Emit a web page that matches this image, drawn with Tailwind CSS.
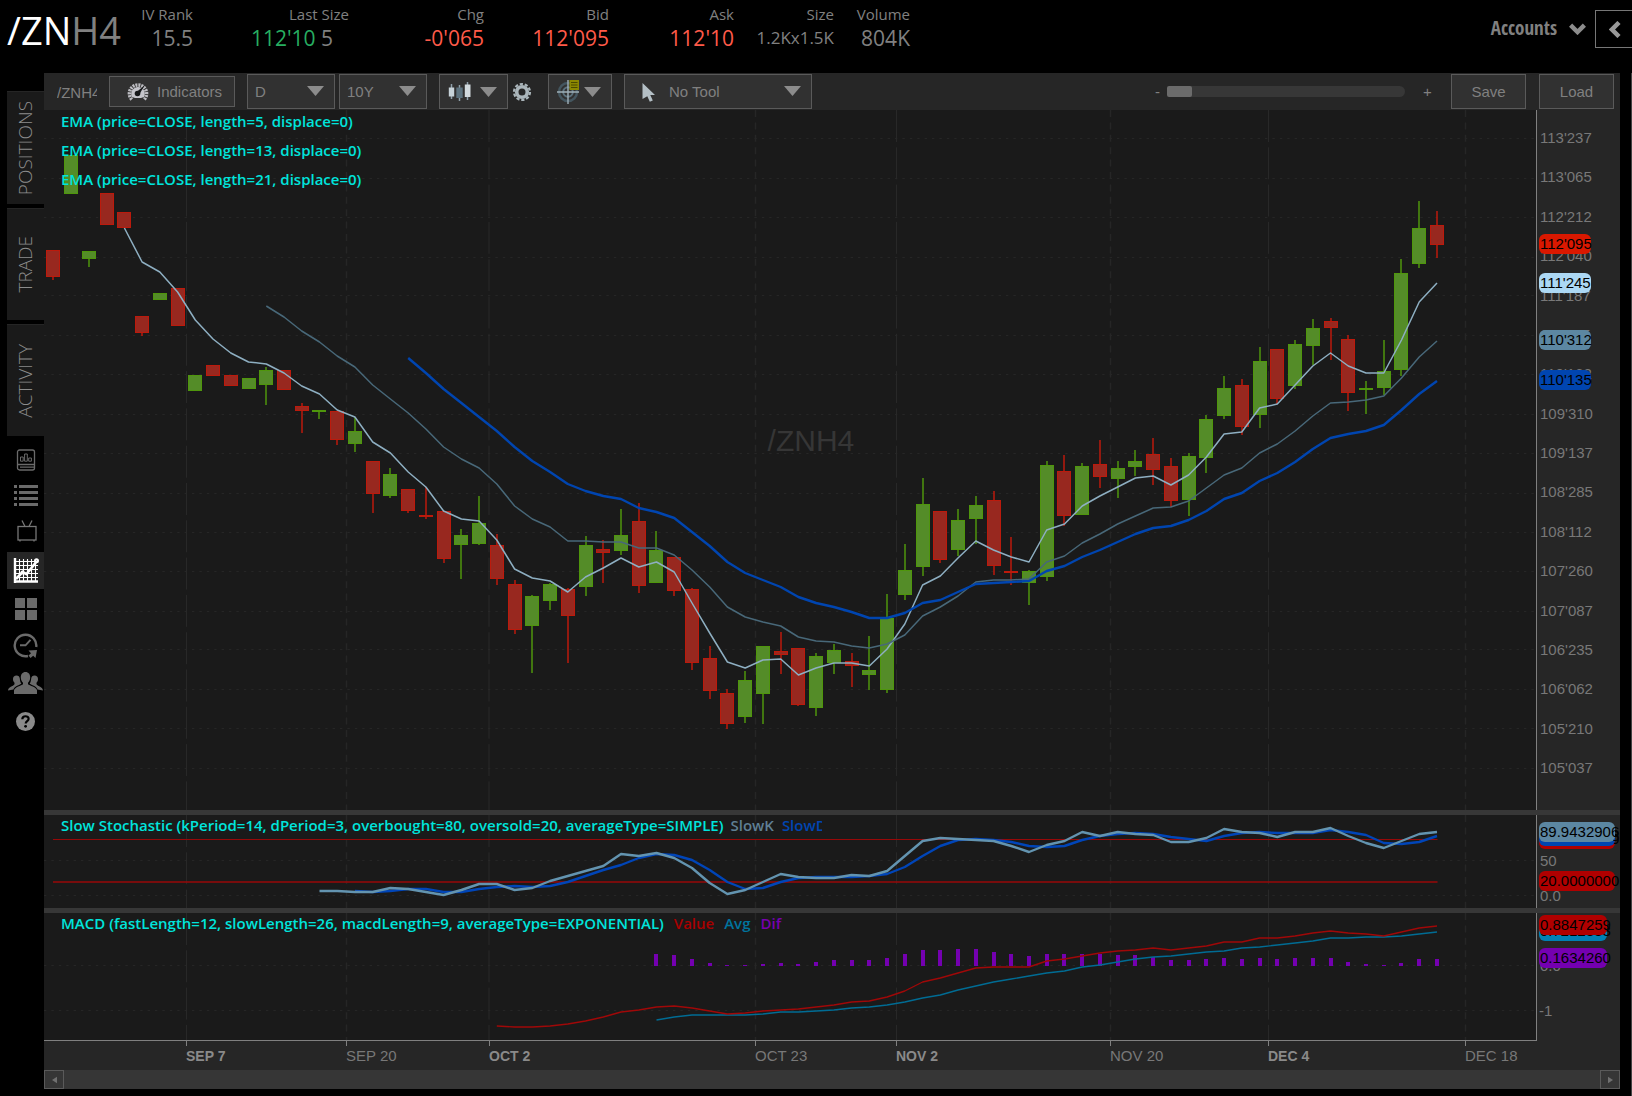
<!DOCTYPE html>
<html lang="en">
<head>
<meta charset="utf-8">
<title>/ZNH4 Chart</title>
<script src="https://cdn.jsdelivr.net/npm/@tailwindcss/browser@4"></script>
</head>
<body class="flex min-h-screen flex-col overflow-x-hidden bg-black font-['Open_Sans','Noto_Sans',sans-serif] text-[#808080]">

<header class="flex h-[73px] shrink-0 items-start">
  <h1 class="ml-[7px] w-[116px] shrink-0 pt-[4px] text-[38px] leading-[52px] text-white">/ZN<span class="text-[#808080]">H4</span></h1>
  <dl class="flex pt-[3px] text-right text-[15px] leading-[22px]">
    <div class="w-[70px]"><dt>IV Rank</dt><dd class="text-[21px] leading-[26px]">15.5</dd></div>
    <div class="w-[156px]"><dt>Last Size</dt><dd class="pr-4 text-[21px] leading-[26px]"><span class="text-[#27ae60]">112'10</span> 5</dd></div>
    <div class="w-[135px]"><dt>Chg</dt><dd class="text-[21px] leading-[26px] text-[#ff5a49]">-0'065</dd></div>
    <div class="w-[125px]"><dt>Bid</dt><dd class="text-[21px] leading-[26px] text-[#ff5a49]">112'095</dd></div>
    <div class="w-[125px]"><dt>Ask</dt><dd class="text-[21px] leading-[26px] text-[#ff5a49]">112'10</dd></div>
    <div class="w-[100px]"><dt>Size</dt><dd class="text-[17px] leading-[26px]">1.2Kx1.5K</dd></div>
    <div class="w-[76px]"><dt>Volume</dt><dd class="text-[21px] leading-[26px]">804K</dd></div>
  </dl>
  <button class="mt-[10px] ml-auto flex h-[37px] items-center gap-3 font-['Open_Sans_Condensed','Noto_Sans_Condensed','Liberation_Sans_Narrow','Open_Sans',sans-serif] text-[19px] font-bold">Accounts
    <svg class="h-3 w-[17px]" viewBox="0 0 17 12" fill="none" stroke="#8c8c8c" stroke-width="4.5"><path d="M1.6 2.2 8.5 9 15.400 2.2"/></svg>
  </button>
  <button aria-label="Expand panel" class="mt-[10px] ml-[9px] flex h-[38px] w-[37px] items-center justify-center border border-r-0 border-[#777] pl-px">
    <svg class="h-[17px] w-3" viewBox="0 0 12 17" fill="none" stroke="#999" stroke-width="4.500"><path d="M10 1.500 3 8.500l7 7"/></svg>
  </button>
</header>

<div class="flex flex-1 border-r border-[#444]">
  <nav class="flex w-11 shrink-0 flex-col pl-[7px] pt-[18px]">
    <div class="mb-[5px] flex flex-col gap-1 text-[19px] font-light text-[#8c8c8c]">
      <button class="flex h-[113px] items-center justify-center border-t border-[#252525] bg-[#1a1a1a]"><span class="rotate-180 [writing-mode:vertical-rl]">POSITIONS</span></button>
      <button class="flex h-[112px] items-center justify-center border-t border-[#252525] bg-[#1a1a1a]"><span class="rotate-180 [writing-mode:vertical-rl]">TRADE</span></button>
      <button class="flex h-[112px] items-center justify-center border-t border-[#252525] bg-[#1a1a1a]"><span class="rotate-180 [writing-mode:vertical-rl]">ACTIVITY</span></button>
    </div>
    <button aria-label="Reports" class="flex h-[37px] items-center justify-center text-[#6a6a6a]">
      <svg class="h-[22px] w-5" viewBox="0 0 20 22" fill="none" stroke="currentColor" stroke-width="1.300"><rect x="1.500" y="1" width="17" height="20" rx="2"/><path d="M2 15.500h16M4 18.200h14"/><path d="M4.500 12.200V8h2.700v4.200zM8.600 12.200V5h2.700v7.200zM12.700 12.200V9h2.700v3.200z" stroke-width="1"/></svg>
    </button>
    <button aria-label="Watchlist" class="flex h-[35px] items-center justify-center text-[#6a6a6a]">
      <svg class="h-[21px] w-6" viewBox="0 0 24 21" fill="currentColor"><path d="M0 0h3v3H0zM5 0h19v3H5zM0 6h3v3H0zM5 6h19v3H5zM0 12h3v3H0zM5 12h19v3H5zM0 18h3v3H0zM5 18h19v3H5z"/></svg>
    </button>
    <button aria-label="TV" class="flex h-[39px] items-center justify-center pb-1 pl-[2px] text-[#767676]">
      <svg class="h-[22px] w-5" viewBox="0 0 20 22" fill="none" stroke="currentColor" stroke-width="1.300"><rect x="1" y="6.500" width="18" height="13.500"/><path d="m5 .5 3 6M15 .5l-3 6M3 20v1.500M17 20v1.500"/></svg>
    </button>
    <button aria-label="Charts" class="flex h-[37px] items-center justify-center bg-[#262626] text-white">
      <svg class="h-[25px] w-[26px]" viewBox="0 0 26 25" fill="none" stroke="currentColor"><path d="M2 0v25M1 23.500h24" stroke-width="2.400"/><path d="M6.500 1v22M10.500 1v22M14.500 1v22M18.500 1v22M22.500 1v22M2 3.500h23M2 7.500h23M2 11.500h23M2 15.500h23M2 19.500h23" stroke-width="1.100"/><path d="M3 21 9.500 14l4 2 10.500-13" stroke-width="2.600"/><circle cx="23.500" cy="2.800" r="1.500" stroke-width="2"/><circle cx="9.500" cy="14.500" r="1" stroke-width="2"/></svg>
    </button>
    <button aria-label="Grid" class="flex h-[39px] items-center justify-center text-[#6a6a6a]">
      <svg class="h-[22px] w-[22px]" viewBox="0 0 22 22" fill="currentColor"><path d="M0 0h10v10H0zM12 0h10v10H12zM0 12h10v10H0zM12 12h10v10H12z"/></svg>
    </button>
    <button aria-label="History" class="flex h-[35px] items-center justify-center text-[#6a6a6a]">
      <svg class="h-[25px] w-[25px]" viewBox="0 0 25 25" fill="none" stroke="currentColor" stroke-width="2.400"><path d="M15 23A10.800 10.800 0 1 1 23.200 14"/><path d="M7 12.300h5.500l5-5.500" stroke-width="2"/><path d="m15.500 17.500 8.500-.5-1.500 8-2.300-2.300-2.700 2.300-2-2.500 2.500-2.200z" fill="currentColor" stroke="none"/></svg>
    </button>
    <button aria-label="Community" class="flex h-[39px] items-center justify-center text-[#6a6a6a]">
      <svg class="h-[22px] w-[35px]" viewBox="0 0 35 22" fill="currentColor"><path d="M17.500 0c3 0 4.700 2.300 4.700 5.300 0 2.600-1 4.200-2.200 5.400v1.600c1.500 1.300 8.500 2.800 9 6V22H6v-3.700c.5-3.200 7.500-4.700 9-6v-1.600c-1.200-1.200-2.200-2.800-2.200-5.400 0-3 1.700-5.300 4.700-5.300z"/><path d="M8.500 3.500c2 0 3 1.300 3.300 3 .2 2.300.6 4 1.600 5.300-3 1.700-7 2.700-8 5.700L0 18.500c.3-3.500 5-4 6.500-6.200v-1.500C5.300 9.500 5 8.500 5 7c0-2 1.300-3.500 3.500-3.500zM26.500 3.500c-2 0-3 1.300-3.300 3-.2 2.300-.6 4-1.600 5.300 3 1.700 7 2.700 8 5.700l5.400 1c-.3-3.500-5-4-6.500-6.200v-1.500c1.200-1.300 1.500-2.300 1.500-3.800 0-2-1.300-3.500-3.500-3.500z"/></svg>
    </button>
    <button aria-label="Help" class="flex h-[39px] items-center justify-center text-[#8a8a8a]">
      <svg class="h-[19px] w-[19px]" viewBox="0 0 19 19"><circle cx="9.500" cy="9.500" r="9.500" fill="currentColor"/><path d="M6.300 7.200c.1-4 6.500-3.800 6.300-.2-.1 2-2.900 2.200-2.900 4.400" fill="none" stroke="#000" stroke-width="2.200"/><circle cx="9.600" cy="14.300" r="1.400" fill="#000"/></svg>
    </button>
  </nav>

  <main class="mr-[11px] mb-[7px] flex min-w-0 flex-1 flex-col bg-[#262626]">
    <div class="flex h-[37px] shrink-0 items-center font-['Liberation_Sans',Arial,sans-serif] text-[15px] text-[#808080]">
      <input aria-label="Symbol" value="/ZNH4" class="ml-[13px] h-8 w-10 bg-transparent pt-[2px] outline-none">
      <button class="ml-3 flex h-[31px] w-[126px] items-center gap-2 border border-[#5a5a5a] bg-[#313131] pl-[17px]">
        <svg class="h-5 w-[22px]" viewBox="0 0 22 20" fill="none"><path d="M4.800 17.500a8.600 8.600 0 1 1 12.400 0" stroke="#bdbdc2" stroke-width="3.500" stroke-dasharray="2 .9"/><path d="M5 15a6.800 6.800 0 1 1 12 0l-3 1H8z" fill="#c4c4ca"/><circle cx="10.500" cy="11.500" r="2.800" fill="#16181a"/><path d="m9.500 10 8-6.500-5.500 9.500z" fill="#16181a"/></svg>
        <span class="pt-[2px]">Indicators</span>
      </button>
      <div class="relative ml-3">
        <select aria-label="Aggregation" class="block h-[35px] w-[88px] appearance-none border border-[#5a5a5a] bg-[#313131] pt-[2px] pl-[7px]"><option>D</option></select>
        <svg class="pointer-events-none absolute top-3 right-[11px] h-[10px] w-[17px]" viewBox="0 0 17 10"><path d="M0 0h17L8.500 10z" fill="#8c8c8c"/></svg>
      </div>
      <div class="relative ml-1">
        <select aria-label="Range" class="block h-[35px] w-[88px] appearance-none border border-[#5a5a5a] bg-[#313131] pt-[2px] pl-[7px]"><option>10Y</option></select>
        <svg class="pointer-events-none absolute top-3 right-[11px] h-[10px] w-[17px]" viewBox="0 0 17 10"><path d="M0 0h17L8.500 10z" fill="#8c8c8c"/></svg>
      </div>
      <button aria-label="Chart type" class="ml-3 flex h-[35px] w-[69px] items-center gap-2 border border-[#5a5a5a] bg-[#313131] pl-2">
        <svg class="h-5 w-6" viewBox="0 0 24 20"><path d="M3.500 2v15M11.500 3v16M19.500 0v18" stroke="#8fa0aa" stroke-width="1.500"/><path d="M.8 5.500h5.400v9H.8z" fill="#c6d2d8"/><path d="M8.300 5.500h6.400V16H8.300z" fill="#5c727e"/><path d="M16.800 2.500h5.700V15h-5.700z" fill="#d2dade"/></svg>
        <svg class="h-[10px] w-[17px]" viewBox="0 0 17 10"><path d="M0 0h17L8.500 10z" fill="#8c8c8c"/></svg>
      </button>
      <button aria-label="Settings" class="ml-1">
        <svg class="h-5 w-5" viewBox="0 0 20 20" fill="none"><circle cx="10" cy="10" r="5.300" stroke="#aab5ba" stroke-width="3.600"/><circle cx="10" cy="10" r="8" stroke="#aab5ba" stroke-width="2.200" stroke-dasharray="3.200 1.826"/></svg>
      </button>
      <button aria-label="Crosshair" class="ml-4 flex h-[35px] w-16 items-center gap-1 border border-[#5a5a5a] bg-[#313131] pl-2">
        <svg class="h-6 w-[23px]" viewBox="0 0 23 24" fill="none"><circle cx="11" cy="12" r="9" stroke="#44565f" stroke-width="2.500"/><circle cx="11" cy="12" r="4.800" stroke="#5c727d" stroke-width="2"/><path d="M11 0v24M0 12h22" stroke="#9fb0b8" stroke-width="1.400"/><path d="M12.500 0h9.500v10h-9.500z" fill="#8c8800"/><path d="M14 2.500h6.500M14 5h6.500M14 7.500h6.500" stroke="#4c4a00"/></svg>
        <svg class="h-[10px] w-[17px]" viewBox="0 0 17 10"><path d="M0 0h17L8.500 10z" fill="#8c8c8c"/></svg>
      </button>
      <div class="relative ml-3">
        <svg class="pointer-events-none absolute top-[9px] left-[18px] h-[19px] w-[14px]" viewBox="0 0 14 19"><path d="M.5 0 13 12H8.300l2.500 5.500-3 1.300-2.500-5.500L.5 16z" fill="#b4bfc5"/></svg>
        <select aria-label="Drawing tool" class="block h-[35px] w-[188px] appearance-none border border-[#5a5a5a] bg-[#313131] pt-[2px] pl-11"><option>No Tool</option></select>
        <svg class="pointer-events-none absolute top-3 right-[11px] h-[10px] w-[17px]" viewBox="0 0 17 10"><path d="M0 0h17L8.500 10z" fill="#8c8c8c"/></svg>
      </div>
      <div class="ml-auto flex items-center">
        <span class="pt-[2px]">-</span>
        <input type="range" min="0" max="100" value="0" aria-label="Zoom" class="mx-[7px] mr-[18px] h-[11px] w-[238px] appearance-none rounded-md bg-[#373737] [&::-webkit-slider-thumb]:h-[11px] [&::-webkit-slider-thumb]:w-[25px] [&::-webkit-slider-thumb]:appearance-none [&::-webkit-slider-thumb]:rounded-xs [&::-webkit-slider-thumb]:bg-[#6b6b6b]">
        <span class="w-7 pt-[2px]">+</span>
        <button class="h-[35px] w-[75px] border border-[#5a5a5a] bg-[#313131] pt-[2px]">Save</button>
        <button class="mr-[6px] ml-[13px] h-[35px] w-[75px] border border-[#5a5a5a] bg-[#313131] pt-[2px]">Load</button>
      </div>
    </div>

    <section class="flex min-h-[500px] flex-1">
      <div class="relative flex-1 bg-[#1a1a1a]">
        <div class="absolute top-[45%] left-[48.500%] font-['Liberation_Sans',Arial,sans-serif] text-3xl leading-8 text-[#363636]">/ZNH4</div>
        <svg id="price" class="absolute inset-0 h-full w-full" viewBox="44 110 1492 700" preserveAspectRatio="none"></svg>
        <div class="relative flex flex-col gap-[9px] pt-[1px] pl-[17px] text-[15px] leading-5 font-semibold text-[#00e4dc]">
          <p>EMA (price=CLOSE, length=5, displace=0)</p>
          <p>EMA (price=CLOSE, length=13, displace=0)</p>
          <p>EMA (price=CLOSE, length=21, displace=0)</p>
        </div>
      </div>
      <div class="relative flex w-[84px] flex-col justify-between overflow-hidden border-l border-[#808080] pt-[18px] pb-8 pl-[3px] font-['Liberation_Sans',Arial,sans-serif] text-[15px] leading-5 text-[#787878]">
        <span>113'237</span><span>113'065</span><span>112'212</span><span>112'040</span><span>111'187</span><span>111'015</span><span>110'162</span><span>109'310</span><span>109'137</span><span>108'285</span><span>108'112</span><span>107'260</span><span>107'087</span><span>106'235</span><span>106'062</span><span>105'210</span><span>105'037</span>
        <span class="absolute top-[124px] left-[2px] h-5 w-[52px] rounded-md bg-[#da1800] pl-px text-black">112'095</span>
        <span class="absolute top-[163px] left-[2px] h-5 w-[52px] rounded-md bg-[#acd8f4] pl-px text-black">111'245</span>
        <span class="absolute top-[220px] left-[2px] h-5 w-[52px] rounded-md bg-[#5c87a2] pl-px text-black">110'312</span>
        <span class="absolute top-[260px] left-[2px] h-5 w-[52px] rounded-md bg-[#0045b0] pl-px text-black">110'135</span>
      </div>
    </section>

    <div class="h-[5px] shrink-0 bg-[#373737]"></div>

    <section class="flex h-[93px] shrink-0">
      <div class="relative flex-1 bg-[#1a1a1a]">
        <svg id="stoch" class="absolute inset-0 h-full w-full" viewBox="44 815 1492 93" preserveAspectRatio="none"></svg>
        <p class="relative flex pl-[17px] text-[15px] leading-5 font-semibold text-[#00e4dc]">Slow Stochastic (kPeriod=14, dPeriod=3, overbought=80, oversold=20, averageType=SIMPLE)
          <span class="ml-[7px] text-[#5f7f94]">SlowK</span><span class="ml-2 w-10 overflow-hidden text-[#0045b0]">SlowD</span></p>
      </div>
      <div class="relative w-[84px] overflow-hidden border-l border-[#808080] font-['Liberation_Sans',Arial,sans-serif] text-[15px] leading-5 text-[#787878]">
        <span class="absolute top-9 left-[3px]">50</span>
        <span class="absolute top-[71px] left-[3px]">0.0</span>
        <span class="absolute top-[14px] left-[2px] h-5 w-[76px] rounded-md bg-[#b00000] pl-px text-black">80.0000000</span>
        <span class="absolute top-[11px] left-[2px] h-5 w-[76px] rounded-md bg-[#0045b0] pl-px text-black">86.8745218</span>
        <span class="absolute top-[7px] left-[2px] h-5 w-[76px] rounded-md bg-[#5c87a2] pl-px text-black">89.9432906</span>
        <span class="absolute top-14 left-[2px] h-5 w-[76px] rounded-md bg-[#b00000] pl-px text-black">20.0000000</span>
      </div>
    </section>

    <div class="h-[5px] shrink-0 bg-[#373737]"></div>

    <section class="flex h-[128px] shrink-0">
      <div class="relative flex-1 border-b border-[#808080] bg-[#1a1a1a]">
        <svg id="macd" class="absolute inset-0 h-full w-full" viewBox="44 913 1492 127" preserveAspectRatio="none"></svg>
        <p class="relative flex pl-[17px] text-[15px] leading-5 font-semibold text-[#00e4dc]">MACD (fastLength=12, slowLength=26, macdLength=9, averageType=EXPONENTIAL)
          <span class="ml-[10px] text-[#a80000]">Value</span><span class="ml-[10px] text-[#00749e]">Avg</span><span class="ml-[10px] text-[#7800b0]">Dif</span></p>
      </div>
      <div class="relative w-[84px] overflow-hidden border-l border-[#808080] font-['Liberation_Sans',Arial,sans-serif] text-[15px] leading-5 text-[#787878]">
        <span class="absolute top-[43px] left-[3px]">0.0</span>
        <span class="absolute top-[88px] left-[2px]">-1</span>
        <span class="absolute top-2 left-[2px] h-5 w-[68px] rounded-md bg-[#0080b4] pl-px text-black">0.7212833</span>
        <span class="absolute top-[2px] left-[2px] h-5 w-[68px] rounded-md bg-[#b00000] pl-px text-black">0.8847259</span>
        <span class="absolute top-[35px] left-[2px] h-5 w-[68px] rounded-md bg-[#7400b0] pl-px text-black">0.1634260</span>
      </div>
    </section>

    <div class="mr-[84px] grid h-[29px] shrink-0 grid-cols-[142fr_160fr_143fr_266fr_141fr_214fr_158fr_197fr_71fr] font-['Liberation_Sans',Arial,sans-serif] text-[15px] leading-5 whitespace-nowrap text-[#787878]">
      <span></span>
      <div><i class="block h-[5px] w-px bg-[#808080]"></i><b class="block text-[14px] text-[#8a8a8a]">SEP 7</b></div>
      <div><i class="block h-[5px] w-px bg-[#808080]"></i>SEP 20</div>
      <div><i class="block h-[5px] w-px bg-[#808080]"></i><b class="block text-[14px] text-[#8a8a8a]">OCT 2</b></div>
      <div><i class="block h-[5px] w-px bg-[#808080]"></i>OCT 23</div>
      <div><i class="block h-[5px] w-px bg-[#808080]"></i><b class="block text-[14px] text-[#8a8a8a]">NOV 2</b></div>
      <div><i class="block h-[5px] w-px bg-[#808080]"></i>NOV 20</div>
      <div><i class="block h-[5px] w-px bg-[#808080]"></i><b class="block text-[14px] text-[#8a8a8a]">DEC 4</b></div>
      <div><i class="block h-[5px] w-px bg-[#808080]"></i>DEC 18</div>
    </div>

    <div class="flex h-[19px] shrink-0 justify-between bg-[#363636]">
      <button aria-label="Scroll left" class="flex w-5 items-center justify-center border border-[#5a5a5a]"><svg class="h-2 w-[5px]" viewBox="0 0 6 8"><path d="M6 0v8L0 4z" fill="#707070"/></svg></button>
      <button aria-label="Scroll right" class="flex w-5 items-center justify-center border border-[#5a5a5a]"><svg class="h-2 w-[5px]" viewBox="0 0 6 8"><path d="M0 0v8l6-4z" fill="#707070"/></svg></button>
    </div>
  </main>
</div>

<script>
const X = i => 53.4 + 17.738 * i;
const range = (c, a, b, extra) => `<line x1="${c[0]}" y1="${a}" x2="${c[1]}" y2="${b}" ${extra}/>`;

// Month starts use long dashes, the other dates short ones.
const major = [186.5, 489, 896.5, 1268.5], minor = [346.5, 755.5, 1110.5, 1465.5];
const grid = (top, bottom, rows) =>
  rows.map(y => range([44, 1536], y + .5, y + .5, 'stroke="#262626" stroke-dasharray="2.400 5"')).join('') +
  major.map(x => range([x, x], top, bottom, 'stroke="#282828" stroke-dasharray="32 5.300"')).join('') +
  minor.map(x => range([x, x], top, bottom, 'stroke="#262626" stroke-width="1.500" stroke-dasharray="7 5.400"')).join('');
const line = (start, ys, colour, width) =>
  `<polyline fill="none" stroke="${colour}" stroke-width="${width}" stroke-linejoin="round" points="${ys.map((y, k) => X(start + k).toFixed(1) + ',' + y).join(' ')}"/>`;

// [direction, body top, body bottom, high, low]
const candles = [
['r',250,277,250,280],['g',155,194,155,194],['g',251,259,251,267],['r',193,225,193,225],['r',212,228,212,228],
['r',316,333,316,336],['g',293,300,293,300],['r',288,326,288,326],['g',375,391,375,391],['r',365,376,365,376],
['r',375,386,375,386],['g',378,389,378,389],['g',370,385,367,405],['r',370,390,370,390],['r',406,411,403,433],
['g',410,412,410,419],['r',411,440,411,445],['g',431,444,417,452],['r',461,494,461,513],['g',474,496,468,498],
['r',489,511,489,513],['r',515,517,487,519],['r',511,559,511,563],['g',535,545,529,579],['g',523,544,496,545],
['r',545,579,534,585],['r',584,630,580,634],['g',596,626,595,673],['g',584,601,583,610],['r',589,616,588,663],
['g',545,587,536,596],['r',549,553,540,583],['g',535,551,509,555],['r',521,586,503,593],['g',550,583,531,583],
['r',557,591,557,596],['r',589,663,588,670],['r',658,691,646,699],['r',693,724,689,729],['g',680,717,671,723],
['g',646,694,646,724],['r',651,655,632,674],['r',648,705,648,706],['g',656,708,653,716],['g',650,663,644,674],
['r',661,666,653,687],['g',670,675,636,690],['g',618,690,594,693],['g',570,595,544,600],['g',504,567,478,576],
['r',511,560,511,563],['g',520,550,509,556],['g',505,519,496,544],['r',500,566,491,575],['r',571,573,537,585],
['g',571,583,570,605],['g',465,577,461,581],['r',471,516,455,526],['g',466,515,463,515],['r',464,477,440,488],
['g',468,479,461,498],['g',461,467,450,476],['r',454,470,438,485],['r',466,501,458,507],['g',456,500,453,516],
['g',419,458,415,473],['g',388,416,376,419],['r',385,427,379,435],['g',361,415,347,428],['r',349,399,349,404],
['g',344,386,340,389],['g',328,346,319,365],['r',321,328,318,360],['r',339,393,335,411],['g',388,390,381,414],
['g',371,388,340,395],['g',273,370,259,376],['g',228,264,201,268],['r',225,245,211,258]];
const ema5 = [228,262,272,292,320,339,353,362,364,373,386,394,410,417,442,453,472,487,511,519,521,540,569,578,581,592,577,568,558,567,562,572,603,633,662,668,660,659,675,668,663,663,666,649,624,585,576,558,541,550,557,562,530,524,506,496,487,478,476,485,475,457,434,432,408,404,385,366,353,366,373,373,340,302,283];
const ema13 = [306,317,331,342,356,367,385,399,413,429,447,459,468,484,506,519,527,541,541,542,542,548,548,555,570,587,607,617,622,626,637,641,642,646,648,644,635,616,607,596,582,580,580,579,562,556,543,534,524,516,508,507,501,488,475,468,453,444,431,416,403,402,400,396,378,357,341];
const ema21 = [358,373,389,403,417,431,447,461,472,484,491,496,499,508,512,518,532,546,562,573,580,587,597,603,607,612,618,618,613,603,600,592,584,583,582,581,571,566,557,550,542,534,528,526,520,511,499,493,481,473,462,449,438,434,431,425,410,394,381];

document.getElementById('price').innerHTML =
  grid(110, 810, [138,178,217,257,295,335,374,414,453,493,532,571,611,649,689,728,768]) +
  candles.map(([d, t, b, h, l], i) => {
    const x = Math.round(X(i)), edge = d === 'g' ? '#4f960c' : '#bc1a0c', fill = d === 'g' ? '#548c28' : '#98281f';
    return `<path d="M${x} ${h}V${l}" stroke="${edge}" stroke-width="1.500"/><rect x="${x - 6.5}" y="${t + .5}" width="13" height="${b - t - 1}" fill="${fill}" stroke="${edge}"/>`;
  }).join('') +
  line(4, ema5, '#8eafc2', 1.5) + line(12, ema13, '#486879', 1.5) + line(20, ema21, '#0045b0', 2.4);

const slowK = [891,891,892,892,888,889,892,895,890,884,884,890,888,881,876,871,866,854,856,853,858,868,883,894,890,882,874,877,878,878,875,876,871,856,841,838,839,840,841,846,852,845,841,832,836,832,834,835,842,842,838,829,832,833,837,832,832,828,836,843,848,841,834,832];
const slowD = [891,892,891,889,889,892,892,889,887,886,887,886,882,876,870,865,858,854,855,860,870,882,889,888,882,878,877,877,877,876,874,867,856,846,840,839,840,842,846,847,846,840,836,834,833,834,837,839,841,836,833,832,833,833,833,830,832,835,843,844,842,836];
document.getElementById('stoch').innerHTML =
  grid(815, 908, [860, 895]) +
  range([53, 1437.5], 839.5, 839.5, 'stroke="#980808"') + range([53, 1437.5], 882, 882, 'stroke="#980808" stroke-width="1.300"') +
  line(17, slowD, '#0045b8', 2.4) + line(15, slowK, '#6394b0', 2.4);

const value = [1026,1027,1027,1026,1024,1021,1017,1012,1010,1007,1006,1008,1011,1014,1013,1011,1010,1009,1007,1005,1002,1001,997,991,982,978,973,968,967,967,967,961,959,956,953,951,950,948,950,948,946,942,942,938,938,936,933,931,933,934,936,932,928,926];
const avg = [1020,1017,1015,1015,1015,1015,1014,1012,1012,1011,1010,1008,1007,1005,1002,998,995,990,986,982,979,976,973,971,967,965,962,959,957,956,954,952,951,948,947,945,943,941,938,938,937,937,936,934,932];
const dif = [954,955,959,963,965,965,964,963,964,962,960,960,960,958,954,950,950,949,949,952,954,956,954,954,954,954,955,955,957,960,960,959,958,959,958,959,958,958,958,962,964,965,963,959,959];
document.getElementById('macd').innerHTML =
  grid(913, 1040, [965, 1010]) +
  dif.map((y, k) => `<rect x="${Math.round(X(34 + k)) - 2}" y="${y}" width="4" height="${966 - y}" fill="#7400b0"/>`).join('') +
  line(34, avg, '#006c94', 1.4) + line(25, value, '#a00808', 1.4);
</script>
</body>
</html>
